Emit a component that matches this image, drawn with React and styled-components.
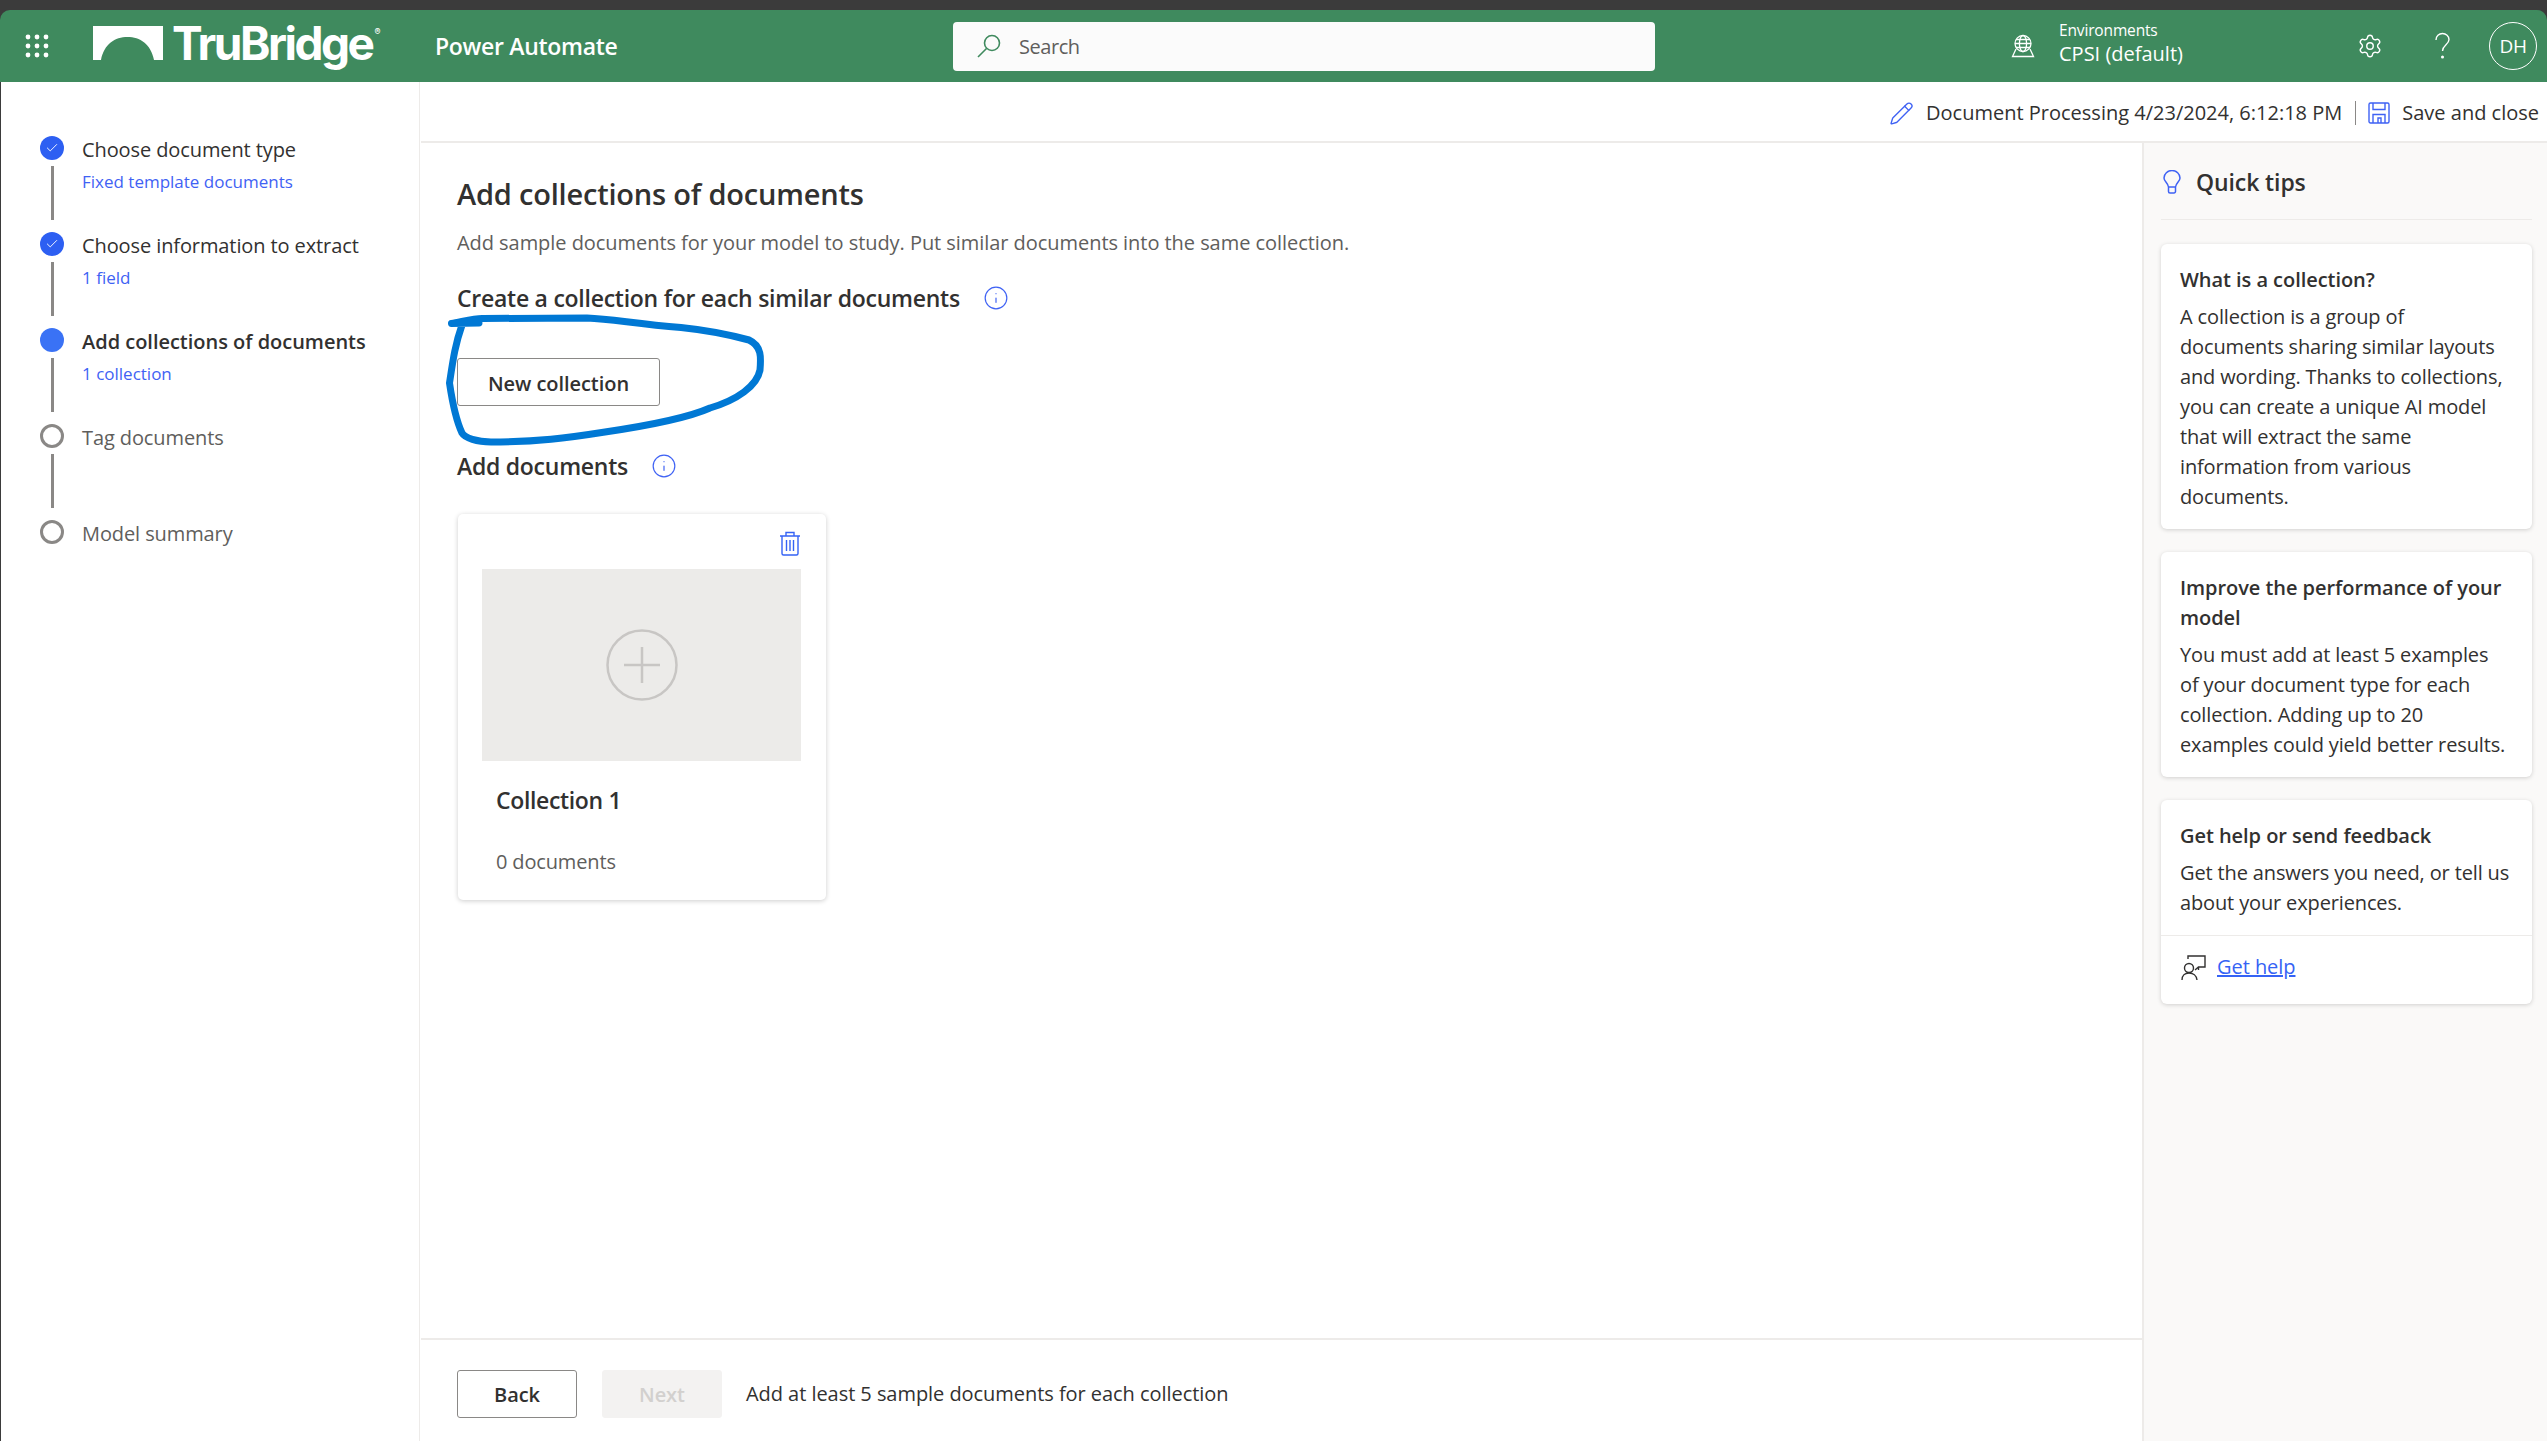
import React from "react";
import styled, { createGlobalStyle } from "styled-components";
import { Check, Settings, Pencil, Info } from "lucide-react";

const Global = createGlobalStyle`
  html, body { margin: 0; padding: 0; background: #3b3b3b; }
  * { box-sizing: border-box; }
  body { font-family: "Open Sans", "Noto Sans", "Liberation Sans", sans-serif; color: #323130; letter-spacing: -0.05px; }
`;

const Page = styled.div`
  width: 2547px; height: 1441px; overflow: hidden; display: flex; flex-direction: column;
  padding-top: 10px; background: #3b3b3b;
`;
const Header = styled.header`
  height: 72px; flex: none; display: flex; align-items: center; background: #3f8a5e; color: #fff;
  border-radius: 10px 10px 0 0;
`;
const Waffle = styled.svg`width: 24px; height: 24px; margin-left: 25px; flex: none;`;
const Logo = styled.div`display: flex; align-items: flex-start; margin-left: 44px; height: 46px; margin-top: 2px; flex: none; width: 342px;`;
const Arch = styled.svg`width: 70px; height: 34px; flex: none; margin-top: 2px;`;
const LogoText = styled.span`
  font-family: Inter, sans-serif; font-weight: 700; font-size: 46px; line-height: 38px; letter-spacing: -2.5px; margin-left: 9px; color: #fff;
`;
const Reg = styled.sup`font-size: 9px; font-weight: 500; letter-spacing: 0; vertical-align: top; line-height: 16px; margin-left: 2px;`;
const Product = styled.div`font-size: 23px; font-weight: 600; line-height: 30px; width: 518px; flex: none; letter-spacing: -0.3px;`;
const SearchBox = styled.div`
  width: 702px; height: 49px; flex: none; background: #fbfbfb; border-radius: 4px; display: flex; align-items: center;
  padding-left: 23px; gap: 17px; color: #605e5c; font-size: 20px; letter-spacing: -0.45px;
`;
const Env = styled.div`display: flex; align-items: center; margin-left: 356px; width: 348px; flex: none; gap: 24px;`;
const EnvText = styled.div`display: flex; flex-direction: column; margin-top: -4px;`;
const EnvLabel = styled.span`font-size: 15.5px; line-height: 20px; letter-spacing: -0.15px;`;
const EnvValue = styled.span`font-size: 20px; line-height: 28px; letter-spacing: 0;`;
const HeadIcons = styled.div`display: flex; align-items: center; gap: 47px; flex: none; margin-left: -2px;`;
const Avatar = styled.div`
  width: 48px; height: 48px; border-radius: 50%; border: 1px solid #fff; display: flex; align-items: center; justify-content: center;
  font-size: 19px; margin-left: -12px; letter-spacing: -0.4px;
`;

const Body = styled.div`flex: 1; display: flex; margin-left: 1px; background: #fff; min-height: 0;`;
const Sidebar = styled.nav`width: 419px; flex: none; padding: 54px 0 0 39px; border-right: 1px solid #edebe9; background: #fff; margin-right: 1px;`;
const Step = styled.div`display: flex; gap: 18px; height: 96px;`;
const Marker = styled.div`width: 24px; flex: none; display: flex; flex-direction: column; align-items: flex-start;`;
const Dot = styled.div`
  width: 24px; height: 24px; border-radius: 50%; display: flex; align-items: center; justify-content: center;
  background: ${p => p.$state === "done" ? "#2d5ff2" : p.$state === "active" ? "#3a72f5" : "#fff"};
  border: ${p => p.$state === "todo" ? "3.5px solid #8a8886" : "none"};
`;
const Connector = styled.div`width: 3px; height: 54px; margin: 6px 0 0 11px; background: #8a8886;`;
const StepText = styled.div`display: flex; flex-direction: column; padding-top: 2px;`;
const StepTitle = styled.div`
  font-size: 20px; line-height: 24px; letter-spacing: ${p => p.$state === "active" ? "-0.02px" : "-0.1px"}; font-weight: ${p => p.$state === "active" ? 600 : 400};
  color: ${p => p.$state === "todo" ? "#605e5c" : "#323130"};
`;
const StepSub = styled.div`font-size: 17px; line-height: 24px; margin-top: 8px; color: #3f62f4; letter-spacing: 0;`;

const Right = styled.div`flex: 1; display: flex; flex-direction: column; min-width: 0;`;
const CommandBar = styled.div`
  height: 61px; flex: none; display: flex; align-items: center; justify-content: flex-end; border-bottom: 2px solid #edebe9;
  padding-right: 8px; font-size: 20px; padding-top: 3px; letter-spacing: 0;
`;
const CmdText = styled.span`line-height: 28px; margin-left: 12px;`;
const CmdDivider = styled.span`width: 1px; height: 24px; background: #8a8886; margin: 0 12px 0 13px;`;
const Split = styled.div`flex: 1; display: flex; min-height: 0;`;
const Main = styled.main`flex: 1; display: flex; flex-direction: column; min-width: 0;`;
const Content = styled.div`flex: 1; padding: 31px 0 0 36px;`;
const Heading = styled.h1`margin: 0; font-size: 29px; line-height: 40px; font-weight: 600; letter-spacing: -0.2px;`;
const Lead = styled.p`margin: 15px 0 0; font-size: 20px; line-height: 28px; color: #605e5c;`;
const SectionRow = styled.div`display: flex; align-items: center; gap: 23px; margin-top: ${p => p.$top}px;`;
const SectionTitle = styled.h2`margin: 0; font-size: 23px; line-height: 28px; font-weight: 600; letter-spacing: -0.26px;`;
const InfoIcon = styled(Info)`color: #3f62f4; flex: none;`;
const Annotated = styled.div`position: relative; margin-top: 46px; width: 203px; height: 48px;`;
const Scribble = styled.svg`position: absolute; left: -20px; top: -48px; width: 340px; height: 140px; pointer-events: none; overflow: visible;`;
const OutlineButton = styled.button`
  width: ${p => p.$w}px; height: 48px; background: #fff; border: 1px solid #8a8886; border-radius: 3px;
  font: 600 20px "Open Sans", sans-serif; letter-spacing: -0.05px; color: #323130; padding: 2px 0 0;
`;
const DisabledButton = styled(OutlineButton)`background: #f3f2f1; border-color: #f3f2f1; color: #d2d0ce;`;

const CollectionCard = styled.article`
  position: relative; width: 368px; height: 386px; margin-top: 34px; margin-left: 1px; background: #fff; border-radius: 5px;
  box-shadow: 0 1px 5px rgba(0,0,0,.2); padding: 55px 24px 0;
`;
const TrashBtn = styled.svg`position: absolute; right: 26px; top: 17px; width: 20px; height: 25px; color: #3563f5;`;
const Thumb = styled.div`width: 319px; height: 192px; background: #ecebe9; display: flex; align-items: center; justify-content: center;`;
const CollectionName = styled.div`font-size: 23px; font-weight: 600; line-height: 30px; margin: 24px 0 0 14px; letter-spacing: -0.35px;`;
const CollectionCount = styled.div`font-size: 20px; line-height: 28px; margin: 33px 0 0 14px; color: #605e5c; letter-spacing: -0.15px;`;

const Footer = styled.footer`
  height: 103px; flex: none; border-top: 2px solid #edebe9; display: flex; align-items: center; padding: 6px 0 0 36px; gap: 25px;
`;
const FooterNote = styled.span`font-size: 20px; line-height: 28px; margin-left: -1px;`;

const Tips = styled.aside`
  width: 405px; flex: none; background: #faf9f8; border-left: 2px solid #edebe9; padding: 0 15px 0 17px; display: flex; flex-direction: column;
`;
const TipsHead = styled.div`height: 77px; flex: none; display: flex; align-items: center; gap: 15px; border-bottom: 1px solid #edebe9; padding: 2px 0 0 2px; margin-bottom: 24px;`;
const TipsTitle = styled.h2`margin: 0; font-size: 23px; font-weight: 600; line-height: 30px; letter-spacing: -0.1px;`;
const TipCard = styled.section`
  background: #fff; border-radius: 6px; box-shadow: 0 1px 4px rgba(0,0,0,.17); margin-bottom: 23px; width: 371px;
`;
const TipBody = styled.div`padding: 21px 10px 17px 19px;`;
const TipTitle = styled.h3`margin: 0 0 7px; font-size: 20px; line-height: 30px; font-weight: 600; letter-spacing: -0.05px;`;
const TipText = styled.p`margin: 0; font-size: 20px; line-height: 30px; letter-spacing: -0.14px;`;
const TipFooter = styled.div`height: 69px; border-top: 1px solid #edebe9; display: flex; align-items: center; gap: 11px; padding: 0 0 6px 20px;`;
const HelpLink = styled.a`font-size: 20px; color: #3563f5; text-decoration: underline; line-height: 28px;`;

const steps = [
  { t: "Choose document type", s: "Fixed template documents", st: "done" },
  { t: "Choose information to extract", s: "1 field", st: "done" },
  { t: "Add collections of documents", s: "1 collection", st: "active" },
  { t: "Tag documents", st: "todo" },
  { t: "Model summary", st: "todo", last: true },
];

const dots = [3, 12, 21];

export default function App() {
  return (
    <Page>
      <Global />
      <Header>
        <Waffle viewBox="0 0 24 24" fill="#fff">
          {dots.map(y => dots.map(x => <circle key={`${x}-${y}`} cx={x} cy={y} r="2.4" />))}
        </Waffle>
        <Logo>
          <Arch viewBox="0 0 70 34">
            <path fill="#fff" d="M0 0H70V34H61C58 18 47 11 34.5 11S11 18 8 34H0Z" />
          </Arch>
          <LogoText>TruBridge<Reg>®</Reg></LogoText>
        </Logo>
        <Product>Power Automate</Product>
        <SearchBox>
          <svg width="26" height="26" viewBox="0 0 26 26" fill="none" stroke="#3f8a5e" strokeWidth="1.6">
            <circle cx="16" cy="10" r="7.5" /><path d="M10.5 15.5 2 24" />
          </svg>
          Search
        </SearchBox>
        <Env>
          <svg width="24" height="24" viewBox="0 0 24 24" fill="none" stroke="#fff" strokeWidth="1.3">
            <circle cx="12" cy="9.5" r="8" /><ellipse cx="12" cy="9.5" rx="3.6" ry="8" /><path d="M4 9.5h16M5 5.5h14M5 13.5h14" />
            <path d="M5 15 1.5 22.5h21L19 15" />
          </svg>
          <EnvText><EnvLabel>Environments</EnvLabel><EnvValue>CPSI (default)</EnvValue></EnvText>
        </Env>
        <HeadIcons>
          <Settings size={26} strokeWidth={1.3} />
          <svg width="24" height="28" viewBox="0 0 24 28" fill="none" stroke="#fff" strokeWidth="1.4">
            <path d="M6 8c0-4 3-6.500 6.500-6.500S19 4 19 7.500c0 5-6.500 5.500-6.500 11.500" /><circle cx="12.500" cy="25" r=".8" fill="#fff" />
          </svg>
          <Avatar>DH</Avatar>
        </HeadIcons>
      </Header>
      <Body>
        <Sidebar>
          {steps.map(s => (
            <Step key={s.t}>
              <Marker>
                <Dot $state={s.st}>{s.st === "done" && <Check size={14} color="#fff" strokeWidth={1.6} />}</Dot>
                {!s.last && <Connector />}
              </Marker>
              <StepText>
                <StepTitle $state={s.st}>{s.t}</StepTitle>
                {s.s && <StepSub>{s.s}</StepSub>}
              </StepText>
            </Step>
          ))}
        </Sidebar>
        <Right>
          <CommandBar>
            <Pencil size={25} color="#3f62f4" strokeWidth={1.3} />
            <CmdText>Document Processing 4/23/2024, 6:12:18 PM</CmdText>
            <CmdDivider />
            <svg width="22" height="22" viewBox="0 0 22 22" fill="none" stroke="#3f62f4" strokeWidth="1.4">
              <path d="M1 2.500A1.500 1.500 0 0 1 2.500 1H19.500A1.500 1.500 0 0 1 21 2.500V19.500A1.500 1.500 0 0 1 19.500 21H2.500A1.500 1.500 0 0 1 1 19.500Z" />
              <path d="M5 1V7.500H17V1M5 21V12.500H17V21M10 21V16H13V21" />
            </svg>
            <CmdText>Save and close</CmdText>
          </CommandBar>
          <Split>
            <Main>
              <Content>
                <Heading>Add collections of documents</Heading>
                <Lead>Add sample documents for your model to study. Put similar documents into the same collection.</Lead>
                <SectionRow $top={27}>
                  <SectionTitle>Create a collection for each similar documents</SectionTitle>
                  <InfoIcon size={26} strokeWidth={1.1} />
                </SectionRow>
                <Annotated>
                  <OutlineButton $w={203}>New collection</OutlineButton>
                  <Scribble viewBox="0 0 340 140" fill="none" stroke="#0078d4" strokeWidth="7" strokeLinecap="round" strokeLinejoin="round">
                    <path d="M14.500 13.500C24 12 38 8 46 8.500L150 8C176 9 198 14 244 17.500 268 20 290 24 312 30 325 36 324 48 323 60 320 76 300 90 273 98 255 106 222 114 168 122 130 128 100 132 54 132 40 132 28 128 25 123 18 108 15 90 12.500 73 16 50 18 35 25 15M14.500 13.500 42 13" />
                  </Scribble>
                </Annotated>
                <SectionRow $top={46}>
                  <SectionTitle>Add documents</SectionTitle>
                  <InfoIcon size={26} strokeWidth={1.1} />
                </SectionRow>
                <CollectionCard>
                  <TrashBtn viewBox="0 0 20 25" fill="none" stroke="currentColor" strokeWidth="1.4">
                    <path d="M0 5H20M6 5V1.500H14V5M2 5V22.500A1.500 1.500 0 0 0 3.500 24H16.500A1.500 1.500 0 0 0 18 22.500V5M6.500 9V20M10 9V20M13.500 9V20" />
                  </TrashBtn>
                  <Thumb>
                    <svg width="72" height="72" viewBox="0 0 72 72" fill="none" stroke="#c8c6c4" strokeWidth="2.500">
                      <circle cx="36" cy="36" r="34.500" /><path d="M18 36H54M36 18V54" />
                    </svg>
                  </Thumb>
                  <CollectionName>Collection 1</CollectionName>
                  <CollectionCount>0 documents</CollectionCount>
                </CollectionCard>
              </Content>
              <Footer>
                <OutlineButton $w={120}>Back</OutlineButton>
                <DisabledButton $w={120}>Next</DisabledButton>
                <FooterNote>Add at least 5 sample documents for each collection</FooterNote>
              </Footer>
            </Main>
            <Tips>
              <TipsHead>
                <svg width="18" height="24" viewBox="0 0 18 24" fill="none" stroke="#3f62f4" strokeWidth="1.5">
                  <path d="M5.500 17C5 13 1 11.500 1 8A8 7.500 0 0 1 17 8C17 11.500 13 13 12.500 17ZM5.500 17V21.500A1.500 1.500 0 0 0 7 23H11A1.500 1.500 0 0 0 12.500 21.500V17" />
                </svg>
                <TipsTitle>Quick tips</TipsTitle>
              </TipsHead>
              <TipCard>
                <TipBody>
                  <TipTitle>What is a collection?</TipTitle>
                  <TipText>A collection is a group of<br />documents sharing similar layouts<br />and wording. Thanks to collections,<br />you can create a unique AI model<br />that will extract the same<br />information from various<br />documents.</TipText>
                </TipBody>
              </TipCard>
              <TipCard>
                <TipBody>
                  <TipTitle>Improve the performance of your<br />model</TipTitle>
                  <TipText>You must add at least 5 examples<br />of your document type for each<br />collection. Adding up to 20<br />examples could yield better results.</TipText>
                </TipBody>
              </TipCard>
              <TipCard>
                <TipBody>
                  <TipTitle>Get help or send feedback</TipTitle>
                  <TipText>Get the answers you need, or tell us<br />about your experiences.</TipText>
                </TipBody>
                <TipFooter>
                  <svg width="25" height="25" viewBox="0 0 25 25" fill="none" stroke="#323130" strokeWidth="1.4">
                    <path d="M7 4V1H24V12H17.500L14 15M17.500 12V15" />
                    <circle cx="8" cy="13" r="4.500" />
                    <path d="M1 25C1 20.500 4 18 8 18S15.500 20.500 16 25" />
                  </svg>
                  <HelpLink href="#">Get help</HelpLink>
                </TipFooter>
              </TipCard>
            </Tips>
          </Split>
        </Right>
      </Body>
    </Page>
  );
}
